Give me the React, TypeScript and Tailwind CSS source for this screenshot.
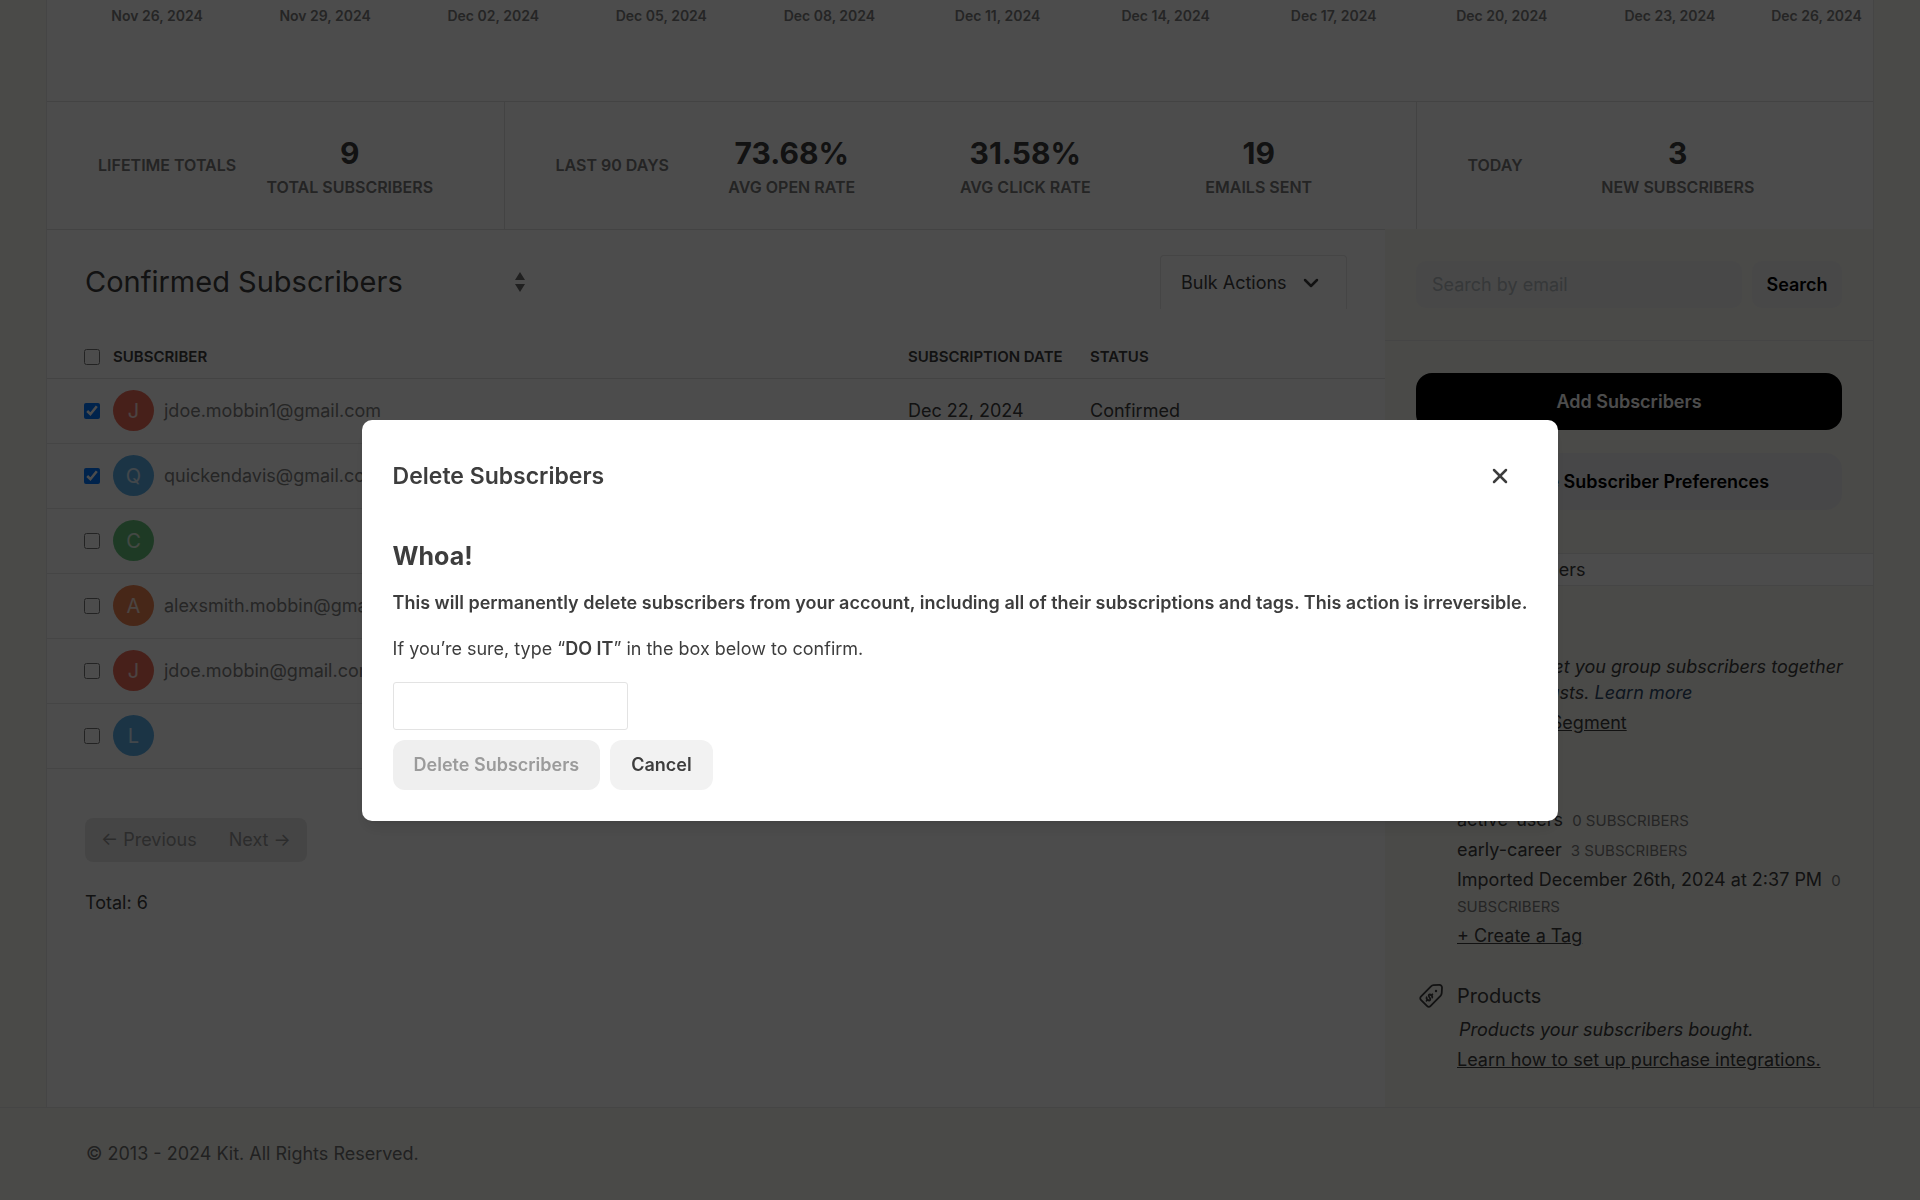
import React, { useState } from "react";
import { ChevronDown, X } from "lucide-react";

interface Subscriber {
  id: number;
  initial: string;
  email: string;
  date: string;
  color: string;
  checked: boolean;
}

const chartDates = [
  "Nov 26, 2024",
  "Nov 29, 2024",
  "Dec 02, 2024",
  "Dec 05, 2024",
  "Dec 08, 2024",
  "Dec 11, 2024",
  "Dec 14, 2024",
  "Dec 17, 2024",
  "Dec 20, 2024",
  "Dec 23, 2024",
];

const initialSubscribers: Subscriber[] = [
  { id: 1, initial: "J", email: "jdoe.mobbin1@gmail.com", date: "Dec 22, 2024", color: "bg-[#ee6c58]", checked: true },
  { id: 2, initial: "Q", email: "quickendavis@gmail.com", date: "Dec 22, 2024", color: "bg-[#5baee8]", checked: true },
  { id: 3, initial: "C", email: "", date: "Dec 20, 2024", color: "bg-[#67c47c]", checked: false },
  { id: 4, initial: "A", email: "alexsmith.mobbin@gmail.com", date: "Dec 19, 2024", color: "bg-[#ee8250]", checked: false },
  { id: 5, initial: "J", email: "jdoe.mobbin@gmail.com", date: "Dec 19, 2024", color: "bg-[#ee6c58]", checked: false },
  { id: 6, initial: "L", email: "", date: "Dec 18, 2024", color: "bg-[#5baee8]", checked: false },
];

const Stat: React.FC<{ value: string; label: string }> = ({ value, label }) => (
  <div className="flex-1 text-center">
    <p className="text-[30px] leading-10 font-bold text-[#3d3d3d]">{value}</p>
    <p className="mt-1 text-base leading-5 font-semibold whitespace-nowrap text-[#787878]">{label}</p>
  </div>
);

const StatGroup: React.FC<{ title: string; className?: string; children: React.ReactNode }> = ({ title, className, children }) => (
  <div className={`flex items-center pr-10 pb-px pl-[51px] ${className ?? ""}`}>
    <h3 className="text-base leading-5 font-semibold whitespace-nowrap text-[#787878]">{title}</h3>
    <div className="flex flex-1">{children}</div>
  </div>
);

const SortIcon = () => (
  <svg viewBox="0 0 10 20" className="pointer-events-none absolute right-0 top-1/2 h-5 w-[10px] -translate-y-1/2 fill-[#6b6b6b]">
    <path d="M5 0 10 8H0z" />
    <path d="M5 20 0 12h10z" />
  </svg>
);

const PriceTagIcon = () => (
  <svg viewBox="0 0 24 24" fill="none" stroke="currentColor" strokeWidth="1.8" strokeLinecap="round" strokeLinejoin="round" className="h-6 w-6">
    <path d="M1.9 12.6 12 2.4c.7-.7 1.5-1.1 2.5-1.2l5.6-.3c1.7-.1 3 1.2 2.9 2.9l-.3 5.4c-.1 1-.5 1.9-1.2 2.6L11.4 22.1c-.9.9-2.3.9-3.2 0L1.9 15.8c-.9-.9-.9-2.3 0-3.2z" />
    <circle cx="17" cy="7" r="1.2" fill="currentColor" stroke="none" />
    <g transform="rotate(42 10.5 13.5)">
      <path d="M12.6 11.7c-.3-.7-1.1-1.100-2.100-1.100-1.300 0-2.200.5-2.200 1.400 0 2.100 4.400.9 4.400 2.900 0 1-.9 1.600-2.200 1.600-1.100 0-2-.4-2.300-1.200" />
      <path d="M10.500 9.200v1.400M10.500 16.500v1.400" />
    </g>
  </svg>
);

const DeleteDialog: React.FC<{ onClose: () => void }> = ({ onClose }) => {
  const [confirmText, setConfirmText] = useState("");

  return (
    <div className="fixed inset-0 z-10 flex items-center justify-center bg-black/70 pt-10">
      <div role="dialog" aria-modal="true" aria-labelledby="dialog-title" className="rounded-[10px] bg-white px-[31px] pb-[31px] text-lg text-[#3d3d3d] shadow-lg">
        <div className="flex items-center justify-between pt-10 pr-[15px]">
          <h2 id="dialog-title" className="text-[23px] leading-8 font-semibold">Delete Subscribers</h2>
          <button type="button" aria-label="Close" onClick={onClose}>
            <X className="h-6 w-6" strokeWidth={2.5} />
          </button>
        </div>
        <h3 className="mt-12 text-[25px] leading-8 font-bold">Whoa!</h3>
        <p className="mt-[18px] leading-[26px] font-semibold">
          This will permanently delete subscribers from your account, including all of their subscriptions and tags. This action is irreversible.
        </p>
        <label htmlFor="confirm" className="mt-5 block leading-[26px]">
          If you’re sure, type “<strong className="font-semibold">DO IT</strong>” in the box below to confirm.
        </label>
        <input
          id="confirm"
          type="text"
          value={confirmText}
          onChange={(e) => setConfirmText(e.target.value)}
          className="mt-5 block h-12 w-[235px] rounded-[3px] border border-[#e3e3e3] px-3 outline-none"
        />
        <div className="mt-[10px] flex gap-[10px] font-semibold">
          <button type="button" disabled={confirmText !== "DO IT"} className="h-[50px] rounded-xl bg-[#efefef] px-[21px] disabled:text-[#9b9b9b]">
            Delete Subscribers
          </button>
          <button type="button" onClick={onClose} className="h-[50px] rounded-xl bg-[#f2f2f2] px-[21px]">Cancel</button>
        </div>
      </div>
    </div>
  );
};

const TagItem: React.FC<{ name: string; count: number }> = ({ name, count }) => (
  <li>
    {name} <span className="ml-1 text-[15px] leading-none text-[#7d7d7d]">{count} SUBSCRIBERS</span>
  </li>
);

const Sidebar = () => (
  <aside className="w-[488px] shrink-0 bg-[#f8f8f2] pb-[34px]">
    <form className="flex gap-[10px] border-b border-[#e6e6e6] px-[31px] py-8" onSubmit={(e) => e.preventDefault()}>
      <input
        type="search"
        aria-label="Search by email"
        placeholder="Search by email"
        className="h-[47px] min-w-0 flex-1 rounded-[10px] bg-[#f1f1f2] px-4 placeholder:text-[#b4bcc0]"
      />
      <button type="submit" className="h-[47px] w-[90px] rounded-[10px] bg-[#f1f1f2] font-semibold text-black">Search</button>
    </form>
    <div className="flex flex-col gap-[23px] px-[31px] pt-8 font-semibold">
      <button type="button" className="h-[57px] rounded-2xl bg-black text-white">Add Subscribers</button>
      <button type="button" className="h-[57px] rounded-2xl bg-[#efeff0] text-black">Manage Subscriber Preferences</button>
    </div>
    <a href="#all" className="mt-[43px] block border-y border-[#e6e6e6] bg-white pl-[72px] leading-[31px]">All Subscribers</a>

    <section className="mt-[34px] pr-5 pl-[72px]">
      <h3 className="text-xl leading-[26px]">Segments</h3>
      <p className="mt-2 pl-[2px] italic">
        Segments let you group subscribers together for broadcasts. <a href="#learn" className="text-[#2f4a6b]">Learn more</a>
      </p>
      <a href="#segment" className="mt-1 inline-block underline">+ Create a Segment</a>
    </section>

    <section className="mt-[34px] pr-[31px] pl-[72px]">
      <h3 className="text-xl leading-[26px]">Tags</h3>
      <ul className="mt-[11px] flex flex-col gap-1">
        <TagItem name="active-users" count={0} />
        <TagItem name="early-career" count={3} />
        <TagItem name="Imported December 26th, 2024 at 2:37 PM" count={0} />
        <li><a href="#tag" className="underline">+ Create a Tag</a></li>
      </ul>
    </section>

    <section className="mt-[34px] pr-[31px] pl-[34px]">
      <h3 className="flex items-center gap-[14px] text-xl leading-[26px]"><PriceTagIcon />Products</h3>
      <div className="pl-[38px]">
        <p className="mt-2 pl-[2px] italic">Products your subscribers bought.</p>
        <a href="#integrations" className="mt-1 inline-block underline">Learn how to set up purchase integrations.</a>
      </div>
    </section>
  </aside>
);

const App: React.FC = () => {
  const [subscribers, setSubscribers] = useState(initialSubscribers);
  const [open, setOpen] = useState(true);

  const toggle = (id: number) =>
    setSubscribers(subscribers.map((s) => (s.id === id ? { ...s, checked: !s.checked } : s)));

  return (
    <div className="min-h-screen bg-[#f8f8f2] font-['Inter',sans-serif] text-lg leading-[26px] text-[#3d3d3d]">
      <div className="mx-[46px] border-x border-[#e6e6e6] bg-white">
        <div className="flex pt-2 pr-[11px] pb-[77px] pl-[26px] text-sm leading-4 font-semibold whitespace-nowrap text-[#7d7d7d]">
          {chartDates.map((d) => (
            <span key={d} className="flex-1 text-center">{d}</span>
          ))}
          <span className="w-[108px] text-right">Dec 26, 2024</span>
        </div>

        <div className="grid h-[128px] grid-cols-4 border-t border-[#e0e0e0]">
          <StatGroup title="LIFETIME TOTALS">
            <Stat value="9" label="TOTAL SUBSCRIBERS" />
          </StatGroup>
          <StatGroup title="LAST 90 DAYS" className="col-span-2 gap-[6px] border-x border-[#e0e0e0]">
            <Stat value="73.68%" label="AVG OPEN RATE" />
            <Stat value="31.58%" label="AVG CLICK RATE" />
            <Stat value="19" label="EMAILS SENT" />
          </StatGroup>
          <StatGroup title="TODAY">
            <Stat value="3" label="NEW SUBSCRIBERS" />
          </StatGroup>
        </div>

        <div className="flex">
          <main className="min-w-0 flex-1 border-t border-[#e0e0e0]">
            <div className="flex h-[104px] items-start justify-between px-[38px] pt-[25px]">
              <div className="relative w-[440px]">
                <select aria-label="Subscriber filter" className="h-[54px] w-full appearance-none text-[29px]">
                  <option>Confirmed Subscribers</option>
                  <option>Cancelled Subscribers</option>
                </select>
                <SortIcon />
              </div>
              <button
                type="button"
                aria-haspopup="menu"
                onClick={() => setOpen(true)}
                className="flex h-[54px] w-[187px] items-center gap-3 rounded-t border border-b-0 border-[#e6e6e6] px-5"
              >
                Bulk Actions
                <ChevronDown className="h-6 w-6" strokeWidth={2.5} />
              </button>
            </div>

            <table className="w-full table-fixed text-left">
              <thead>
                <tr className="h-11 border-b border-[#e0e0e0] text-[15px]">
                  <th className="w-[66px] pt-[2px] pl-[37px]">
                    <input type="checkbox" aria-label="Select all" className="block h-4 w-4" />
                  </th>
                  <th className="pt-[2px] font-semibold">SUBSCRIBER</th>
                  <th className="w-[182px] pt-[2px] font-semibold whitespace-nowrap">SUBSCRIPTION DATE</th>
                  <th className="w-[295px] pt-[2px] font-semibold">STATUS</th>
                </tr>
              </thead>
              <tbody>
                {subscribers.map((s) => (
                  <tr key={s.id} className="h-[65px] border-b border-[#e6e6e6]">
                    <td className="pl-[37px]">
                      <input
                        type="checkbox"
                        aria-label={s.email || s.initial}
                        checked={s.checked}
                        onChange={() => toggle(s.id)}
                        className="block h-4 w-4"
                      />
                    </td>
                    <td>
                      <div className="flex items-center gap-[10px]">
                        <span className={`flex h-[41px] w-[41px] items-center justify-center rounded-full text-xl text-white/80 ${s.color}`}>
                          {s.initial}
                        </span>
                        <a href="#subscriber" className="text-[#808080]">{s.email}</a>
                      </div>
                    </td>
                    <td>{s.date}</td>
                    <td>Confirmed</td>
                  </tr>
                ))}
              </tbody>
            </table>

            <div className="px-[38px] pt-[49px]">
              <div className="flex h-11 w-fit overflow-hidden rounded-lg bg-[#e8e8e8] text-[#949494]">
                <button type="button" disabled className="px-4">← Previous</button>
                <button type="button" disabled className="px-4">Next →</button>
              </div>
              <p className="mt-7">Total: 6</p>
            </div>
          </main>
          <Sidebar />
        </div>
      </div>

      <footer className="border-t border-[#e6e6e6] px-[86px] py-[33px] text-[#707070]">© 2013 - 2024 Kit. All Rights Reserved.</footer>

      {open && <DeleteDialog onClose={() => setOpen(false)} />}
    </div>
  );
};

export default App;
